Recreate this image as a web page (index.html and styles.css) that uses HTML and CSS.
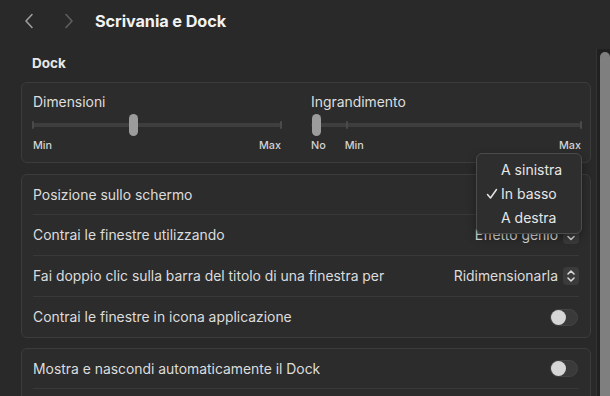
FILE: index.html
```html
<!DOCTYPE html>
<html lang="it">
<head>
<meta charset="utf-8">
<title>Scrivania e Dock</title>
<link rel="stylesheet" href="styles.css">
</head>
<body>
<div class="window">
  <header class="toolbar">
    <span class="nav back"><svg width="12" height="16" viewBox="0 0 12 16"><path d="M9 1.5 L3 8 L9 14.5" fill="none" stroke="currentColor" stroke-width="1.6" stroke-linecap="round" stroke-linejoin="round"/></svg></span>
    <span class="nav fwd"><svg width="12" height="16" viewBox="0 0 12 16"><path d="M3 1.5 L9 8 L3 14.5" fill="none" stroke="currentColor" stroke-width="1.6" stroke-linecap="round" stroke-linejoin="round"/></svg></span>
    <h1 class="title">Scrivania e Dock</h1>
  </header>
  <main class="content">
    <h2 class="section">Dock</h2>
    <section class="card sliders">
      <div class="slider-col">
        <div class="slider-label">Dimensioni</div>
        <div class="slider">
          <span class="track"></span>
          <span class="tick" style="left:0%"></span>
          <span class="tick" style="left:100%"></span>
          <span class="thumb" style="left:40.5%"></span>
        </div>
        <div class="scale"><span>Min</span><span>Max</span></div>
      </div>
      <div class="slider-col">
        <div class="slider-label">Ingrandimento</div>
        <div class="slider">
          <span class="track"></span>
          <span class="tick" style="left:13.2%"></span>
          <span class="tick" style="left:100%"></span>
          <span class="thumb" style="left:1.8%"></span>
        </div>
        <div class="scale"><span>No</span><span class="min2">Min</span><span class="spacer"></span><span>Max</span></div>
      </div>
    </section>
    <section class="card list">
      <div class="row"><span class="label">Posizione sullo schermo</span></div>
      <div class="row"><span class="label">Contrai le finestre utilizzando</span>
        <span class="popup-btn"><span class="value">Effetto genio</span><span class="stepper"><svg width="10" height="12" viewBox="0 0 10 12"><path d="M2 7.5 L5 10.5 L8 7.5" fill="none" stroke="currentColor" stroke-width="1.6" stroke-linecap="round" stroke-linejoin="round"/></svg></span></span>
      </div>
      <div class="row"><span class="label">Fai doppio clic sulla barra del titolo di una finestra per</span>
        <span class="popup-btn"><span class="value">Ridimensionarla</span><span class="stepper"><svg width="10" height="14" viewBox="0 0 10 14"><path d="M2 5 L5 2 L8 5 M2 9 L5 12 L8 9" fill="none" stroke="currentColor" stroke-width="1.6" stroke-linecap="round" stroke-linejoin="round"/></svg></span></span>
      </div>
      <div class="row"><span class="label">Contrai le finestre in icona applicazione</span><span class="toggle"><span class="knob"></span></span></div>
    </section>
    <section class="card list last">
      <div class="row"><span class="label">Mostra e nascondi automaticamente il Dock</span><span class="toggle"><span class="knob"></span></span></div>
      <div class="row"></div>
    </section>
  </main>
  <div class="menu">
    <div class="item">A sinistra</div>
    <div class="item checked"><span class="check"><svg width="12" height="12" viewBox="0 0 12 12"><path d="M1.5 6.5 L4.5 10 L10.5 1.5" fill="none" stroke="currentColor" stroke-width="1.5" stroke-linecap="round" stroke-linejoin="round"/></svg></span>In basso</div>
    <div class="item">A destra</div>
  </div>
  <div class="scrollbar"><div class="sb-thumb"></div></div>
</div>
</body>
</html>
```
FILE: styles.css
```css
* { box-sizing: border-box; }
html, body {
  margin: 0;
  padding: 0;
  background: #292929;
  overflow: hidden;
}
body {
  font-family: "Inter", "Liberation Sans", sans-serif;
  color: #dcdcdc;
  -webkit-font-smoothing: antialiased;
}
.window {
  position: relative;
  width: 610px;
  height: 396px;
  overflow: hidden;
}
.toolbar {
  display: flex;
  align-items: center;
  height: 41px;
  padding-left: 23px;
}
.nav {
  display: flex;
  width: 12px;
  height: 16px;
}
.nav.back { color: #9d9d9d; }
.nav.fwd { color: #5f5f5f; margin-left: 28px; }
.title {
  margin: 0 0 0 20px;
  font-size: 16.3px;
  font-weight: 700;
  color: #f2f2f2;
  letter-spacing: -0.1px;
}
.content {
  padding: 0 19px 0 21px;
}
.section {
  margin: 14px 0 0 11px;
  height: 16px;
  line-height: 16px;
  font-size: 13.5px;
  font-weight: 700;
  color: #e8e8e8;
}
.card {
  background: #2c2c2c;
  border: 1px solid #3c3c3c;
  border-radius: 6px;
}
.sliders {
  margin-top: 11px;
  height: 81px;
  display: grid;
  grid-template-columns: 248px 270px;
  column-gap: 30px;
  padding: 11px 11px 0;
}
.slider-label {
  font-size: 13.9px;
  line-height: 17px;
  color: #dedede;
}
.slider {
  position: relative;
  height: 22px;
  margin-top: 3px;
}
.track {
  position: absolute;
  left: 0;
  right: 0;
  top: 9px;
  height: 4px;
  background: #3e3e3e;
  border-radius: 2px;
}
.tick {
  position: absolute;
  top: 7px;
  width: 2px;
  height: 8px;
  margin-left: -1px;
  background: #4a4a4a;
  border-radius: 1px;
}
.thumb {
  position: absolute;
  top: 0;
  width: 9px;
  height: 22px;
  margin-left: -4px;
  background: #9c9c9c;
  border-radius: 5px;
}
.scale {
  display: flex;
  justify-content: space-between;
  margin-top: 3px;
  font-size: 10.8px;
  font-weight: 500;
  line-height: 13px;
  color: #d2d2d2;
}
.scale .min2 { margin-left: 19px; }
.scale .spacer { flex: 1; }
.list {
  margin-top: 11px;
}
.list.last { margin-top: 10px; }
.row {
  display: flex;
  align-items: center;
  justify-content: space-between;
  height: 41px;
  margin: 0 11px;
  border-top: 1px solid #393939;
  font-size: 13.9px;
  color: #dcdcdc;
}
.row:first-child { border-top: none; height: 39px; }
.label { white-space: nowrap; }
.popup-btn {
  display: flex;
  align-items: center;
  gap: 5px;
}
.value { color: #dcdcdc; }
.stepper {
  display: flex;
  align-items: center;
  justify-content: center;
  width: 16px;
  height: 18px;
  background: #3b3b3b;
  border-radius: 4px;
  color: #d8d8d8;
}
.toggle {
  position: relative;
  width: 28px;
  height: 17px;
  background: #3a3a3a;
  border: 1px solid #444;
  border-radius: 9px;
  margin-right: 1px;
}
.knob {
  position: absolute;
  left: 0;
  top: 0;
  width: 15px;
  height: 15px;
  background: #d6d6d6;
  border-radius: 50%;
}
.menu {
  position: absolute;
  left: 476px;
  top: 153px;
  width: 106px;
  height: 81px;
  padding-top: 4px;
  background: #2e2e2e;
  border: 1px solid #4c4c4c;
  border-radius: 6px;
  box-shadow: 0 4px 10px rgba(0,0,0,0.35);
  font-size: 14px;
  color: #e6e6e6;
}
.item {
  position: relative;
  height: 24px;
  line-height: 24px;
  padding-left: 24px;
}
.check {
  position: absolute;
  left: 9px;
  top: 6px;
  display: flex;
  color: #e6e6e6;
}
.scrollbar {
  position: absolute;
  left: 596px;
  top: 49px;
  width: 14px;
  bottom: 0;
  background: #202020;
  border-left: 1px solid #333;
}
.sb-thumb {
  position: absolute;
  left: 3px;
  right: 0;
  top: 3px;
  bottom: 0;
  background: #7f7f7f;
  border-radius: 5px 5px 0 0;
}
```
